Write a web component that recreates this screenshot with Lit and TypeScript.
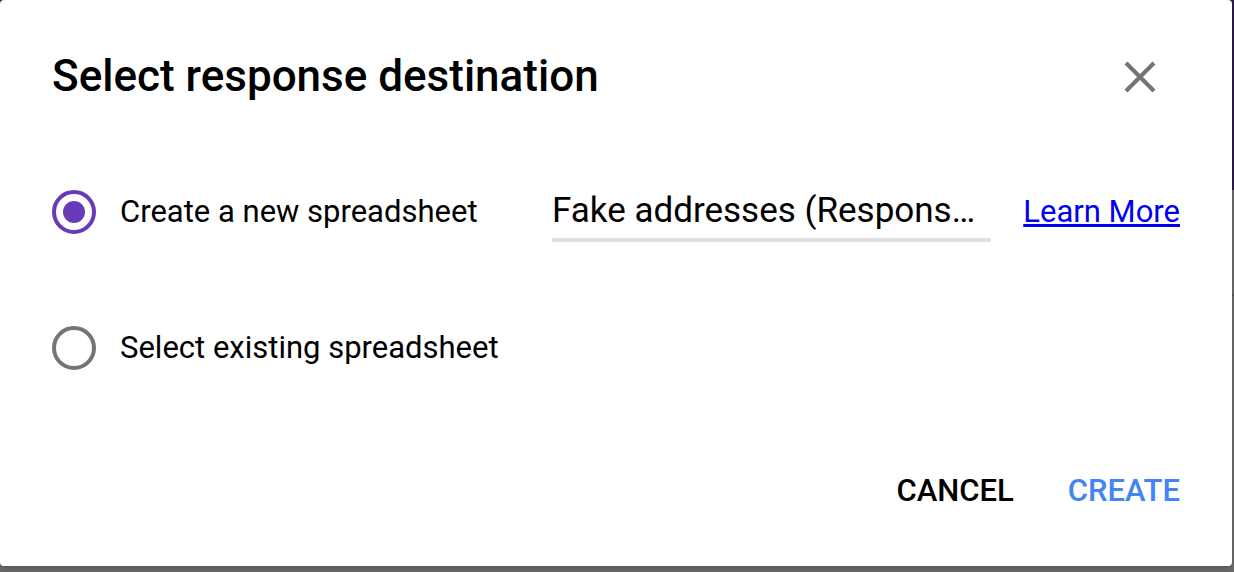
import { LitElement, html, css } from "lit";
import { customElement, state } from "lit/decorators.js";

type Destination = "new" | "existing";

@customElement("app-root")
export class AppRoot extends LitElement {
  static styles = css`
    :host {
      display: flex;
      box-sizing: border-box;
      min-height: 100vh;
      padding: 0 2px 6px 0;
      font-family: Roboto, "Liberation Sans", sans-serif;
      color: #000;
      background:
        linear-gradient(#5b5b5b, #5b5b5b) right 294px / 2px 2px no-repeat,
        linear-gradient(#2e1b4d, #2e1b4d) top / 100% 190px no-repeat,
        #6d6d6d;
    }
    .dialog {
      flex: 1;
      min-width: 0;
      display: flex;
      flex-direction: column;
      box-sizing: border-box;
      padding: 48px 52px;
      border-radius: 4px;
      background: #fff;
      box-shadow: 0 4px 8px rgba(0, 0, 0, 0.2);
    }
    .header {
      display: flex;
      align-items: center;
      justify-content: space-between;
      padding-right: 20px;
    }
    .title {
      margin: 0;
      font-size: 44px;
      line-height: 56px;
      font-weight: 500;
    }
    .close {
      display: flex;
      padding: 0;
      border: 0;
      background: none;
      cursor: pointer;
    }
    .options {
      display: flex;
      flex-direction: column;
      gap: 76px;
      min-width: 0;
      margin: 0;
      padding: 78px 0 0;
      border: 0;
    }
    .row {
      display: flex;
      align-items: center;
      height: 60px;
      font-size: 31px;
      line-height: 40px;
    }
    .option {
      display: flex;
      align-items: center;
      gap: 24px;
      flex: 0 0 500px;
      white-space: nowrap;
    }
    .radio {
      appearance: none;
      display: grid;
      place-content: center;
      box-sizing: border-box;
      width: 44px;
      height: 44px;
      margin: 0;
      border: 4px solid #757575;
      border-radius: 50%;
      background: #fff;
    }
    .radio:checked {
      border-color: #673ab7;
    }
    .radio:checked::before {
      content: "";
      width: 22px;
      height: 22px;
      border-radius: 50%;
      background: #673ab7;
    }
    .name {
      flex: 1;
      width: 0;
      min-width: 0;
      box-sizing: border-box;
      height: 60px;
      margin-right: 32px;
      padding: 0;
      border: 0;
      border-bottom: 4px solid #e0e0e0;
      border-radius: 0;
      outline: none;
      background: none;
      font: inherit;
      font-size: 35px;
      color: inherit;
      text-overflow: ellipsis;
    }
    .more {
      color: #0000ee;
      text-decoration: underline;
      white-space: nowrap;
    }
    .actions {
      display: flex;
      justify-content: flex-end;
      gap: 54px;
      margin-top: auto;
    }
    .action {
      padding: 0;
      border: 0;
      background: none;
      font: inherit;
      font-size: 31px;
      line-height: 54px;
      font-weight: 500;
      color: #000;
      cursor: pointer;
    }
    .primary {
      color: #4285f4;
    }
  `;

  @state() private destination: Destination = "new";

  render() {
    return html`
      <form class="dialog" role="dialog" aria-labelledby="title" @submit=${(e: Event) => e.preventDefault()}>
        <header class="header">
          <h1 class="title" id="title">Select response destination</h1>
          <button class="close" type="button" aria-label="Close">
            <svg width="40" height="40" viewBox="0 0 40 40" aria-hidden="true">
              <path d="M6 7 34 35M34 7 6 35" fill="none" stroke="#757575" stroke-width="4.2" />
            </svg>
          </button>
        </header>
        <fieldset class="options" aria-labelledby="title">
          <div class="row">
            <label class="option">
              <input class="radio" type="radio" name="destination" value="new"
                .checked=${this.destination === "new"}
                @change=${() => (this.destination = "new")} />
              Create a new spreadsheet
            </label>
            <input class="name" type="text" aria-label="Spreadsheet name" value="Fake addresses (Responses)" />
            <a class="more" href="#">Learn More</a>
          </div>
          <div class="row">
            <label class="option">
              <input class="radio" type="radio" name="destination" value="existing"
                .checked=${this.destination === "existing"}
                @change=${() => (this.destination = "existing")} />
              Select existing spreadsheet
            </label>
          </div>
        </fieldset>
        <footer class="actions">
          <button class="action" type="button">CANCEL</button>
          <button class="action primary" type="submit">CREATE</button>
        </footer>
      </form>
    `;
  }
}
